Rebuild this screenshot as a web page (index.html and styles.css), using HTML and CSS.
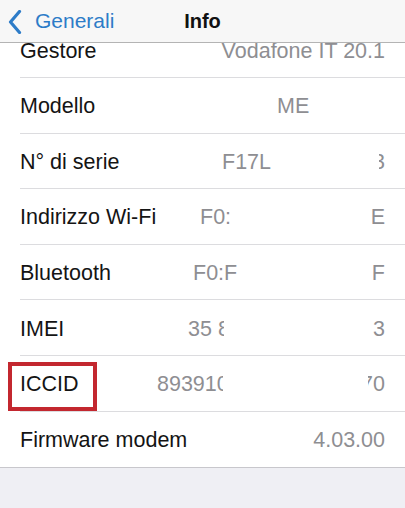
FILE: index.html
```html
<!DOCTYPE html>
<html lang="it">
<head>
<meta charset="utf-8">
<title>Info</title>
<link rel="stylesheet" href="styles.css">
</head>
<body>
<div class="screen">
  <div class="list">
    <div class="row">
      <span class="label">Gestore</span>
      <span class="val">Vodafone IT 20.1</span>
    </div>
    <div class="row">
      <span class="label">Modello</span>
      <span class="val split w-model"><span>ME</span><span></span></span>
    </div>
    <div class="row">
      <span class="label">N° di serie</span>
      <span class="val split w-serial"><span>F17L</span><span class="tail t-serial"><span>3</span></span></span>
    </div>
    <div class="row">
      <span class="label">Indirizzo Wi-Fi</span>
      <span class="val split w-wifi"><span>F0:</span><span>E</span></span>
    </div>
    <div class="row">
      <span class="label">Bluetooth</span>
      <span class="val split w-bt"><span>F0:F</span><span>F</span></span>
    </div>
    <div class="row">
      <span class="label">IMEI</span>
      <span class="val split w-imei"><span class="head h-imei">35 8</span><span>3</span></span>
    </div>
    <div class="row">
      <span class="label">ICCID</span>
      <span class="val split w-iccid"><span class="head h-iccid">893910</span><span class="tail t-iccid"><span>70</span></span></span>
      <span class="mark"></span>
    </div>
    <div class="row last">
      <span class="label">Firmware modem</span>
      <span class="val">4.03.00</span>
    </div>
  </div>
  <div class="nav">
    <div class="back">
      <svg class="chev" width="14" height="24" viewBox="0 0 14 24"><polyline points="11.5,1.5 2.5,12 11.5,22.5" fill="none" stroke="#2d7cc8" stroke-width="3.2" stroke-linecap="round" stroke-linejoin="round"/></svg>
      <span>Generali</span>
    </div>
    <div class="title">Info</div>
  </div>
</div>
</body>
</html>
```

FILE: styles.css
```css
html, body {
  margin: 0;
  padding: 0;
}

body {
  width: 405px;
  height: 508px;
  font-family: "Liberation Sans", Arial, sans-serif;
  background: #efeff4;
}

.screen {
  position: relative;
  width: 405px;
  height: 508px;
  overflow: hidden;
  background: #efeff4;
}

.nav {
  position: absolute;
  top: 0;
  left: 0;
  width: 405px;
  height: 42px;
  background: #f7f7f7;
  border-bottom: 1px solid #b4b4b4;
  display: flex;
  align-items: center;
  justify-content: center;
}

.back {
  position: absolute;
  left: 8px;
  top: 0;
  height: 42px;
  display: flex;
  align-items: center;
  gap: 13px;
  color: #2d7cc8;
  font-size: 21px;
}

.chev {
  display: block;
  margin-top: 1px;
}

.title {
  font-size: 20px;
  font-weight: bold;
  color: #111;
  margin-top: 1px;
}

.list {
  margin-top: 22.4px;
  background: #fff;
  border-bottom: 1px solid #c8c7cc;
}

.row {
  position: relative;
  height: 55.6px;
  box-sizing: border-box;
  margin-left: 20px;
  padding-right: 20px;
  padding-top: 3px;
  border-bottom: 1px solid #dcdcdf;
  display: flex;
  align-items: center;
  font-size: 21.5px;
}

.row.last {
  border-bottom: none;
}

.label {
  color: #141414;
  white-space: nowrap;
}

.val {
  margin-left: auto;
  color: #8e8e92;
  white-space: nowrap;
}

.split {
  display: flex;
  justify-content: space-between;
}

.w-model { width: 108px; }
.w-serial { width: 163px; }
.w-wifi { width: 185px; }
.w-bt { width: 192px; }
.w-imei { width: 197px; }
.w-iccid { width: 228px; }

.head {
  overflow: hidden;
}

.h-imei { width: 36px; }
.h-iccid { width: 66px; }

.tail {
  display: flex;
  justify-content: flex-end;
  overflow: hidden;
}

.t-serial { width: 6px; }
.t-iccid { width: 17px; }

.mark {
  position: absolute;
  left: -12px;
  top: 6px;
  width: 89px;
  height: 49px;
  box-sizing: border-box;
  border: 4px solid #c3272f;
}
```
